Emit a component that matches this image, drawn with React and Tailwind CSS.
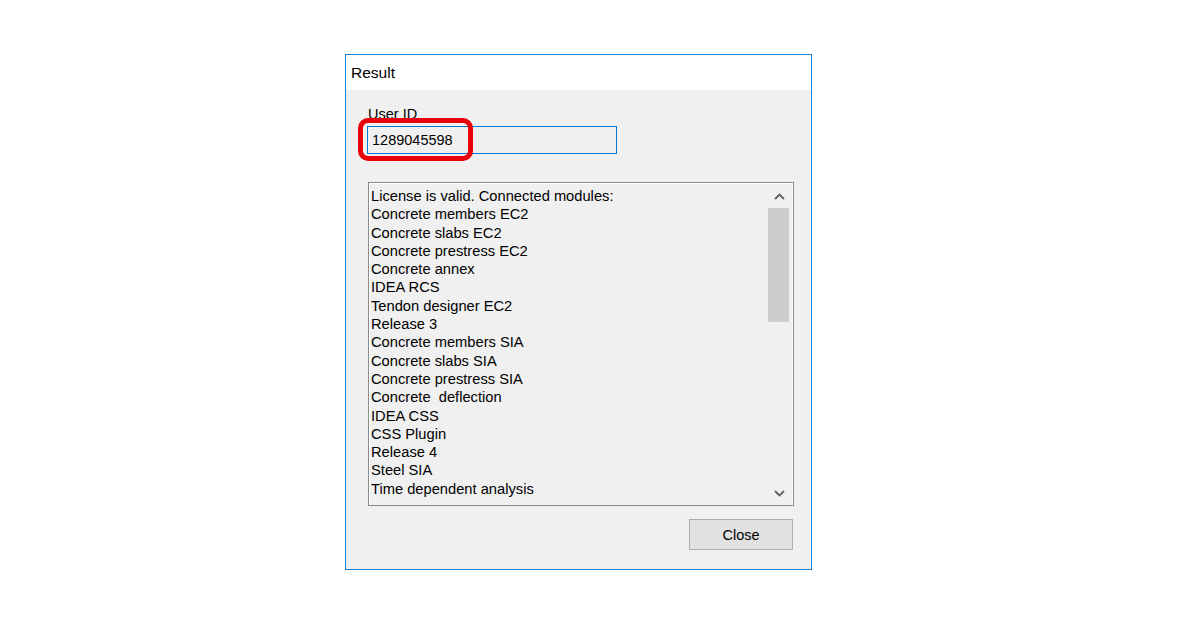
import React from "react";

const modules = [
  "License is valid. Connected modules:",
  "Concrete members EC2",
  "Concrete slabs EC2",
  "Concrete prestress EC2",
  "Concrete annex",
  "IDEA RCS",
  "Tendon designer EC2",
  "Release 3",
  "Concrete members SIA",
  "Concrete slabs SIA",
  "Concrete prestress SIA",
  "Concrete  deflection",
  "IDEA CSS",
  "CSS Plugin",
  "Release 4",
  "Steel SIA",
  "Time dependent analysis",
];

const Chevron = ({ up }) => (
  <svg width="11" height="7" viewBox="0 0 11 7">
    <path
      d={up ? "M1 6 L5.5 1.5 L10 6" : "M1 1 L5.5 5.5 L10 1"}
      fill="none"
      stroke="#606060"
      strokeWidth="1.8"
    />
  </svg>
);

export default function App() {
  return (
    <div
      className="w-[1200px] h-[630px] bg-white pl-[345px] pt-[54px] text-black"
      style={{ fontFamily: '"Liberation Sans", Arial, sans-serif' }}
    >
      <div className="w-[467px] h-[516px] border border-[#1883d7] flex flex-col">
        <div className="h-[35px] bg-white flex items-center pl-[5px] text-[15.5px]">
          Result
        </div>
        <div className="flex-1 bg-[#f0f0f0] pl-[21px] pt-[15px] text-[14.5px] leading-[18px]">
          <div className="pl-[1px]">User ID</div>
          <div className="relative mt-[3px] w-[250px] h-[28px] border border-[#0078d7] flex items-center pl-[4px]">
            1289045598
            <div className="absolute left-[-10px] top-[-9px] w-[115px] h-[43px] border-[5px] border-[#e8000b] rounded-[10px]" />
          </div>
          <div className="mt-[28px] ml-[1px] w-[426px] h-[324px] border border-[#8a8a8a] flex">
            <div className="flex-1 border-t border-l border-white pl-[1px] pt-[3px] leading-[18.3px] text-[14.7px] overflow-hidden">
              {modules.map((m) => (
                <div key={m} className="whitespace-pre">
                  {m}
                </div>
              ))}
            </div>
            <div className="w-[25px] border-t border-r border-white flex flex-col items-start">
              <div className="h-[24px] w-[22px] flex items-center justify-center">
                <Chevron up />
              </div>
              <div className="w-[21px] h-[114px] bg-[#cdcdcd]" />
              <div className="flex-1" />
              <div className="h-[24px] w-[22px] flex items-center justify-center">
                <Chevron />
              </div>
            </div>
          </div>
          <div className="flex justify-end pr-[18px] mt-[13px]">
            <button className="w-[104px] h-[31px] bg-[#e1e1e1] border border-[#adadad] text-[14.5px]">
              Close
            </button>
          </div>
        </div>
      </div>
    </div>
  );
}
